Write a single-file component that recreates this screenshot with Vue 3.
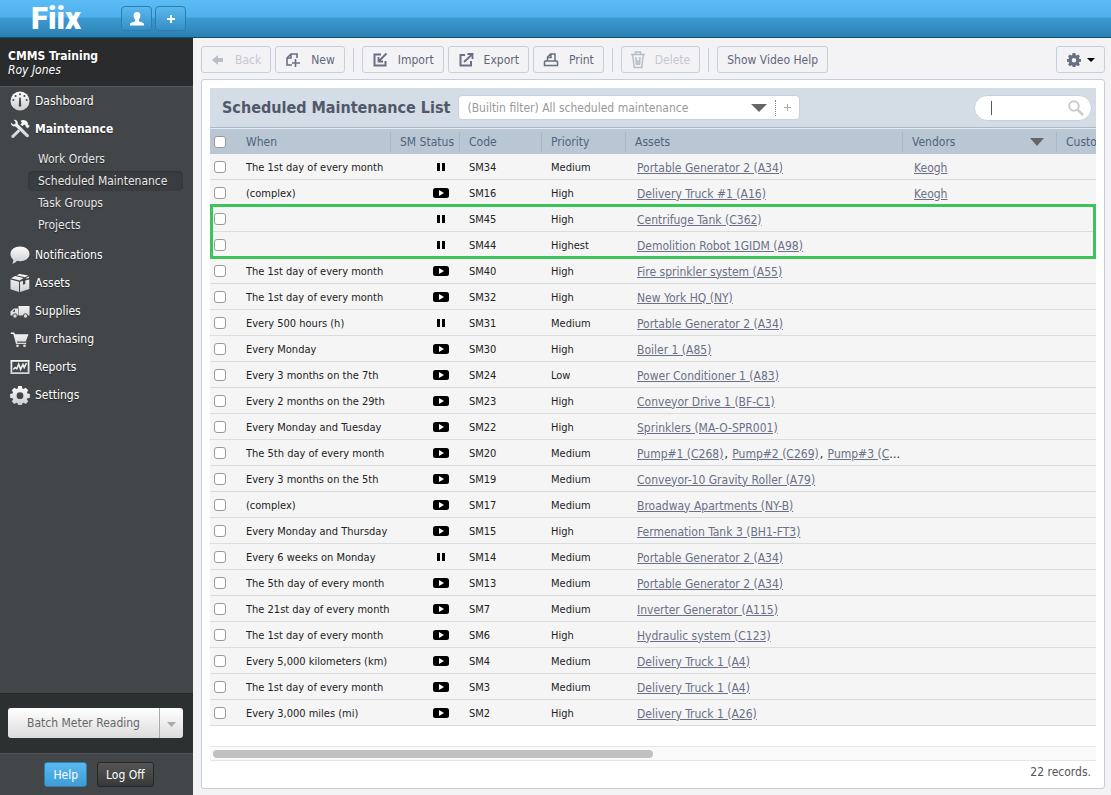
<template>
  <div class="page">
    <header class="topbar">
      <a class="logo" href="#">Fiix</a>
      <button class="top-btn" type="button" aria-label="Profile">
        <svg width="16" height="16" viewBox="0 0 16 16"><path fill="#fff" d="M8 1c2.300 0 3.500 1.600 3.400 3.800-.1 1.500-.7 2.900-1.500 3.700v1.500c.4 1 4.600 1.200 5.100 3v1.500H1V13c.5-1.800 4.700-2 5.100-3V8.500C5.300 7.700 4.700 6.300 4.600 4.800 4.500 2.600 5.700 1 8 1z" /></svg>
      </button>
      <button class="top-btn" type="button" aria-label="Add">
        <svg width="10" height="10" viewBox="0 0 10 10"><path d="M5 1v8M1 5h8" stroke="#fff" stroke-width="2" /></svg>
      </button>
    </header>

    <div class="body">
      <aside class="sidebar">
        <div class="account">
          <strong>CMMS Training</strong>
          <em>Roy Jones</em>
        </div>
        <nav class="nav">
          <template v-for="item in menu" :key="item.id">
            <a class="nav-item" :class="{ active: item.children }" href="#">
              <svg class="nav-icon" width="20" height="20" viewBox="0 0 20 20">
                <defs>
                  <linearGradient :id="'g-' + item.id" x1="0" y1="0" x2="0" y2="20" gradientUnits="userSpaceOnUse">
                    <stop offset="0" stop-color="#fff" />
                    <stop offset="1" stop-color="#ccc" />
                  </linearGradient>
                </defs>
                <g :fill="`url(#g-${item.id})`">
                  <template v-if="item.id === 'dashboard'">
                    <circle cx="10" cy="10" r="9.500" />
                    <path fill="#434648" d="M9.300 6.500h1.400l.5 7.500a1.300 1.300 0 1 1-2.400 0z" />
                    <g fill="#434648"><circle cx="10" cy="3.300" r="1" /><circle cx="5.600" cy="5" r="1" /><circle cx="14.400" cy="5" r="1" /><circle cx="3.300" cy="9" r="1" /><circle cx="16.700" cy="9" r="1" /></g>
                  </template>
                  <template v-else-if="item.id === 'maintenance'">
                    <path d="M3.800.8C6.300.4 8.200 2.300 7.800 5l10.800 10.700c1.200 1.400-.8 3.400-2.200 2.200L5.500 7.400C3 7.900.7 6.200.9 3.500l2.300 2 2-.5.400-1.900z" />
                    <path d="M10.500 1.800c3.200-1.600 6-.4 7.300 2l.2 2 1.800 1-2.100 2.600-2-1.600-.2-1.300-1.400-1-1.700 1.700-2-2 1.600-1.500z" />
                    <path d="M8.200 10.200l2 2-6.400 6.500c-1.500 1.100-3.300-.6-2.200-2.200z" />
                  </template>
                  <path v-else-if="item.id === 'notifications'" d="M10 1.500c5.400 0 9.500 3.200 9.500 7.400s-4.100 7.300-9.500 7.300c-1.100 0-2.100-.1-3-.4-1 1.500-2.800 2.700-4.800 3 .8-1.200 1.200-2.800 1-4.200C1.500 13.200.5 11.200.5 8.900.5 4.700 4.600 1.500 10 1.500z" />
                  <template v-else-if="item.id === 'assets'">
                    <path d="M.5 6.500l8.500 2.300V19L.5 16.200zM10 8.800l3-.8v3.700l2.300-.8V7.400l4-1v9.700L10 19zM1 5.300L5.200 3l8.300 2-3.800 2.600zM6.600 2.300L9.500 1l8.700 1.500-3.200 1.800zM19 3.400v1.500l-2.500.6-.7-.6z" />
                  </template>
                  <template v-else-if="item.id === 'supplies'">
                    <path d="M8.500 5h11v9.500h-11z" />
                    <path fill-rule="evenodd" d="M4 7.500h4v7H.5v-4zM4.300 8.500l-1.800 2.200H5V8.500z" />
                    <g stroke="#434648" stroke-width="1"><circle cx="5" cy="15" r="2.200" /><circle cx="15.500" cy="15" r="2.200" /></g>
                  </template>
                  <template v-else-if="item.id === 'purchasing'">
                    <path d="M.8 3.500h3.400l.8 1.700h13.500l-2.700 7.300H7l.3 1.300h8.900v1.200H6L3.300 4.900H.8z" />
                    <circle cx="7.500" cy="16.800" r="1.400" /><circle cx="14.500" cy="16.800" r="1.400" />
                  </template>
                  <template v-else-if="item.id === 'reports'">
                    <path fill-rule="evenodd" d="M.5 3h19v14H.5zM2.300 4.800v10.400h15.400V4.800z" />
                    <path fill="none" stroke="#eee" stroke-width="1.600" d="M3.300 12.500l1.900-2 1.600 1.200L8.700 7.200l1.900 5.200 2.300-5 1.300 3.200 2.200-4.500" />
                  </template>
                  <template v-else>
                    <path fill-rule="evenodd" d="M8.200 1h3.600l.5 2.400 1.300.6 2.100-1.300 2.500 2.500-1.300 2.100.6 1.300 2.400.5v3.600l-2.400.5-.6 1.300 1.300 2.100-2.500 2.500-2.100-1.300-1.300.6-.5 2.100H8.200l-.5-2.100-1.300-.6-2.100 1.300-2.500-2.500 1.300-2.100-.6-1.300-2.400-.5V9.100l2.400-.5.6-1.300-1.300-2.100 2.500-2.500L6.400 4l1.300-.6zM10 7.300a3.400 3.400 0 1 0 0 6.800 3.400 3.400 0 0 0 0-6.800z" />
                  </template>
                </g>
              </svg>
              {{ item.label }}
            </a>
            <ul v-if="item.children" class="subnav">
              <li v-for="child in item.children" :key="child">
                <a href="#" :class="{ current: child === 'Scheduled Maintenance' }">{{ child }}</a>
              </li>
            </ul>
          </template>
        </nav>
        <div class="batch">
          <div class="split">
            <button class="split-main" type="button">Batch Meter Reading</button>
            <button class="split-arrow" type="button" aria-label="More actions">
              <svg width="9" height="5" viewBox="0 0 9 5"><path fill="#aaa" d="M0 0h9L4.500 5z" /></svg>
            </button>
          </div>
        </div>
        <div class="session">
          <button class="help" type="button">Help</button>
          <button class="logoff" type="button">Log Off</button>
        </div>
      </aside>

      <main class="main">
        <div class="toolbar">
          <button class="tool" type="button" disabled>
            <svg width="14" height="14" viewBox="0 0 14 14"><path fill="#b9bdc6" d="M1 7l6-5v3h5v4H7v3z" /></svg>
            Back
          </button>
          <button class="tool" type="button">
            <svg width="16" height="16" viewBox="0 0 16 16"><path fill="none" stroke="#6a7083" stroke-width="1.600" d="M12 6V2H6L2 6v7h5M6 2v4H2M10.500 7v8M7 11h8" /></svg>
            New
          </button>
          <span class="sep"></span>
          <button class="tool" type="button">
            <svg width="16" height="16" viewBox="0 0 16 16"><path fill="none" stroke="#6a7083" stroke-width="2" d="M9 2.500H2.500v11h11V9" /><path fill="none" stroke="#6a7083" stroke-width="1.800" d="M14.500 1.500L7 9M6.500 5v4.500H11" /></svg>
            Import
          </button>
          <button class="tool" type="button">
            <svg width="16" height="16" viewBox="0 0 16 16"><path fill="none" stroke="#6a7083" stroke-width="2" d="M7 3H2.500v10.500H13V9" /><path fill="none" stroke="#6a7083" stroke-width="1.800" d="M6 10l8-7.500M9.500 2h5v5" /></svg>
            Export
          </button>
          <button class="tool" type="button">
            <svg width="16" height="16" viewBox="0 0 16 16"><path fill="none" stroke="#6a7083" stroke-width="1.500" d="M4.500 9V5l3-3H12v7M4.500 9H2l-.5 1v3.500h13V10l-.5-1H4.500M8 2v3.500H4.500" /></svg>
            Print
          </button>
          <span class="sep"></span>
          <button class="tool" type="button" disabled>
            <svg width="14" height="18" viewBox="0 0 14 18"><path fill="none" stroke="#b9bdc6" stroke-width="1.500" d="M0 3.500h14M4.500 3V1h5v2M1.800 4l1.400 12.500h7.600L12.200 4M5 6l.5 8M9 6l-.5 8M7 9v5" /></svg>
            Delete
          </button>
          <span class="sep"></span>
          <button class="tool" type="button">Show Video Help</button>
          <button class="tool gear" type="button" aria-label="Options">
            <svg width="14" height="14" viewBox="0 0 20 20"><path fill="#6a7083" fill-rule="evenodd" d="M8 0h4l.5 3 1.300.6L16 2l2.500 2.500-1.600 2.300.6 1.300 2.500.4v4l-2.500.4-.6 1.300 1.600 2.300L16 19l-2.300-1.600-1.200.6-.5 2H8l-.5-2-1.200-.6L4 19l-2.500-2.500 1.600-2.300-.6-1.300L0 12.500v-4l2.500-.4.6-1.300-1.600-2.300L4 2l2.200 1.600L7.500 3zM10 7a3 3 0 1 0 0 6.500A3 3 0 0 0 10 7z" /></svg>
            <svg width="8" height="4" viewBox="0 0 8 4"><path d="M0 0h8L4 4z" /></svg>
          </button>
        </div>

        <section class="panel">
          <div class="titlebar">
            <h1>Scheduled Maintenance List</h1>
            <div class="filter">
              <select aria-label="Filter">
                <option>(Builtin filter) All scheduled maintenance</option>
              </select>
              <svg class="down" width="16" height="8" viewBox="0 0 16 8"><path fill="#666" d="M0 0h16L8 8z" /></svg>
              <button type="button" aria-label="Add filter">
                <svg width="7" height="7" viewBox="0 0 7 7"><path stroke="#aaa" d="M3.500 0v7M0 3.500h7" /></svg>
              </button>
            </div>
            <div class="search">
              <input type="text" aria-label="Search">
              <span class="caret"></span>
              <svg width="16" height="16" viewBox="0 0 16 16"><g fill="none" stroke="#ccc" stroke-width="2"><circle cx="6" cy="6" r="4.800" /><path stroke-width="2.500" d="M9.500 9.500l5.500 5.500" /></g></svg>
            </div>
          </div>

          <div class="grid">
            <table>
              <colgroup>
                <col class="c-check"><col class="c-when"><col class="c-status"><col class="c-code">
                <col class="c-priority"><col class="c-assets"><col class="c-vendors"><col>
              </colgroup>
              <thead>
                <tr>
                  <th class="check"><input type="checkbox" aria-label="Select all"></th>
                  <th class="first">When</th>
                  <th>SM Status</th>
                  <th>Code</th>
                  <th>Priority</th>
                  <th>Assets</th>
                  <th>
                    <span class="sortable">Vendors
                      <svg width="14" height="8" viewBox="0 0 14 8"><path fill="#666" d="M0 0h14L7 8z" /></svg>
                    </span>
                  </th>
                  <th>Custo</th>
                </tr>
              </thead>
              <tbody>
                <tr v-for="row in rows" :key="row.code">
                  <td class="check"><input type="checkbox" :aria-label="'Select ' + row.code"></td>
                  <td>{{ row.when }}</td>
                  <td class="status">
                    <svg v-if="row.paused" width="16" height="10" viewBox="0 0 16 10"><path d="M4 1h3v8H4zM9 1h3v8H9z" /></svg>
                    <svg v-else width="16" height="10" viewBox="0 0 16 10"><rect width="16" height="10" rx="2.500" /><path fill="#fff" d="M6 2l5 3-5 3z" /></svg>
                  </td>
                  <td>{{ row.code }}</td>
                  <td>{{ row.priority }}</td>
                  <td class="links">
                    <template v-for="(asset, i) in row.assets" :key="asset"><span v-if="i" class="comma">, </span><a href="#">{{ asset }}</a></template>
                  </td>
                  <td class="links"><a v-if="row.vendor" href="#">{{ row.vendor }}</a></td>
                  <td></td>
                </tr>
              </tbody>
            </table>
            <div class="highlight"></div>
          </div>

          <div class="hscroll"><div class="thumb"></div></div>
          <footer class="count">{{ rows.length }} records.</footer>
        </section>
      </main>
    </div>
  </div>
</template>

<script setup>
const menu = [
  { id: 'dashboard', label: 'Dashboard' },
  {
    id: 'maintenance',
    label: 'Maintenance',
    children: ['Work Orders', 'Scheduled Maintenance', 'Task Groups', 'Projects']
  },
  { id: 'notifications', label: 'Notifications' },
  { id: 'assets', label: 'Assets' },
  { id: 'supplies', label: 'Supplies' },
  { id: 'purchasing', label: 'Purchasing' },
  { id: 'reports', label: 'Reports' },
  { id: 'settings', label: 'Settings' }
]

const item = (when, paused, code, priority, assets, vendor = '') => ({
  when, paused, code, priority, assets: [].concat(assets), vendor
})

const rows = [
  item('The 1st day of every month', true, 'SM34', 'Medium', 'Portable Generator 2 (A34)', 'Keogh'),
  item('(complex)', false, 'SM16', 'High', 'Delivery Truck #1 (A16)', 'Keogh'),
  item('', true, 'SM45', 'High', 'Centrifuge Tank (C362)'),
  item('', true, 'SM44', 'Highest', 'Demolition Robot 1GIDM (A98)'),
  item('The 1st day of every month', false, 'SM40', 'High', 'Fire sprinkler system (A55)'),
  item('The 1st day of every month', false, 'SM32', 'High', 'New York HQ (NY)'),
  item('Every 500 hours (h)', true, 'SM31', 'Medium', 'Portable Generator 2 (A34)'),
  item('Every Monday', false, 'SM30', 'High', 'Boiler 1 (A85)'),
  item('Every 3 months on the 7th', false, 'SM24', 'Low', 'Power Conditioner 1 (A83)'),
  item('Every 2 months on the 29th', false, 'SM23', 'High', 'Conveyor Drive 1 (BF-C1)'),
  item('Every Monday and Tuesday', false, 'SM22', 'High', 'Sprinklers (MA-O-SPR001)'),
  item('The 5th day of every month', false, 'SM20', 'Medium', ['Pump#1 (C268)', 'Pump#2 (C269)', 'Pump#3 (C270)']),
  item('Every 3 months on the 5th', false, 'SM19', 'Medium', 'Conveyor-10 Gravity Roller (A79)'),
  item('(complex)', false, 'SM17', 'Medium', 'Broadway Apartments (NY-B)'),
  item('Every Monday and Thursday', false, 'SM15', 'High', 'Fermenation Tank 3 (BH1-FT3)'),
  item('Every 6 weeks on Monday', true, 'SM14', 'Medium', 'Portable Generator 2 (A34)'),
  item('The 5th day of every month', false, 'SM13', 'Medium', 'Portable Generator 2 (A34)'),
  item('The 21st day of every month', false, 'SM7', 'Medium', 'Inverter Generator (A115)'),
  item('The 1st day of every month', false, 'SM6', 'High', 'Hydraulic system (C123)'),
  item('Every 5,000 kilometers (km)', false, 'SM4', 'Medium', 'Delivery Truck 1 (A4)'),
  item('The 1st day of every month', false, 'SM3', 'Medium', 'Delivery Truck 1 (A4)'),
  item('Every 3,000 miles (mi)', false, 'SM2', 'High', 'Delivery Truck 1 (A26)')
]
</script>

<style>
body {
  margin: 0;
  background: #f3f3f6;
}
</style>

<style scoped>
.page {
  display: flex;
  flex-direction: column;
  min-height: 100vh;
  font-family: Tahoma, "DejaVu Sans Condensed", "Noto Sans", sans-serif;
  font-size: 12px;
  color: #222;
}
.page * { box-sizing: border-box; }
button, input, select {
  font-family: inherit;
  font-size: 12px;
  margin: 0;
}
svg { flex: none; }

.topbar {
  display: flex;
  align-items: center;
  height: 38px;
  padding-left: 31px;
  background: linear-gradient(#5cbcf6 0, #4eb0ec 45%, #3c9ad2 50%, #2b7fb2 100%);
  border-bottom: 1px solid #0d4f78;
}
.logo {
  width: 90px;
  font-family: Roboto, "Open Sans", sans-serif;
  font-size: 31px;
  font-weight: 900;
  line-height: 38px;
  color: #fff;
  text-decoration: none;
}
.top-btn {
  display: flex;
  align-items: center;
  justify-content: center;
  width: 31px;
  height: 25px;
  margin-right: 3px;
  padding: 0;
  border: 1px solid #2b7db0;
  border-radius: 4px;
  background: linear-gradient(#5bb8ef, #348fc6);
}

.body {
  display: flex;
  flex: 1;
}
.sidebar {
  display: flex;
  flex-direction: column;
  flex: none;
  width: 193px;
  background: #434648;
  color: #fff;
  text-shadow: 0 1px 1px #222;
}
.account {
  display: flex;
  flex-direction: column;
  height: 49px;
  padding: 11px 8px 0;
  background: #2a2b2d;
  border-bottom: 1px solid #55585a;
  line-height: 14px;
}
.nav { flex: 1; }
.nav-item {
  display: flex;
  align-items: center;
  gap: 5px;
  height: 28px;
  padding-left: 10px;
  color: #fff;
  text-decoration: none;
}
.nav-item.active { font-weight: bold; }
.subnav {
  list-style: none;
  margin: 0;
  padding: 5px 10px 5px 28px;
}
.subnav li {
  height: 22px;
  padding-top: 1px;
}
.subnav a {
  display: block;
  height: 20px;
  padding-left: 10px;
  border-radius: 5px;
  line-height: 20px;
  color: #e8e8e8;
  text-decoration: none;
}
.subnav .current {
  background: #3a3d3f;
  box-shadow: inset 0 1px 2px #303234;
}
.batch {
  height: 60px;
  padding: 14px 10px 0 8px;
  background: #2d3031;
  border-top: 1px solid #252829;
}
.split {
  display: flex;
  height: 30px;
  border-radius: 3px;
  background: linear-gradient(#fff, #dcdcdc);
}
.split button {
  border: 0;
  padding: 0;
  background: none;
  color: #666;
}
.split .split-main { flex: 1; }
.split .split-arrow {
  width: 24px;
  border-left: 1px solid #aaa;
}
.session {
  display: flex;
  justify-content: center;
  gap: 10px;
  height: 42px;
  padding: 8px 0 0 5px;
  border-top: 1px solid #505355;
}
.session button {
  height: 25px;
  padding: 0 8px;
  border: 1px solid #2f7fb0;
  border-radius: 3px;
  color: #fff;
}
.help { background: linear-gradient(#5bb8f0, #3d9cd6); }
.session .logoff {
  border-color: #252728;
  background: linear-gradient(#555, #393939);
}

.main {
  display: flex;
  flex-direction: column;
  flex: 1;
  min-width: 0;
  padding: 8px 6px 6px 8px;
}
.toolbar {
  display: flex;
  align-items: center;
  gap: 4px;
  height: 27px;
  margin-bottom: 6px;
}
.tool {
  display: flex;
  align-items: center;
  justify-content: center;
  gap: 10px;
  height: 27px;
  padding: 0 9px;
  border: 1px solid #c9ced8;
  border-radius: 3px;
  background: #f3f3f6;
  color: #5f667a;
  white-space: nowrap;
}
.tool:disabled { color: #c6c9cf; }
.tool.gear {
  gap: 6px;
  width: 49px;
  margin-left: auto;
}
.sep {
  width: 1px;
  height: 24px;
  margin: 0 4px;
  background: #c9ced8;
}

.panel {
  display: flex;
  flex-direction: column;
  flex: 1;
  padding: 8px;
  border: 1px solid #c3cddb;
  border-radius: 3px;
  background: #fff;
}
.titlebar {
  display: flex;
  align-items: center;
  height: 40px;
  padding: 0 4px 0 12px;
  background: #d4dce6;
  border-bottom: 1px solid #a8b9cb;
}
h1 {
  margin: 0 8px 0 0;
  font-size: 16px;
  line-height: 24px;
  color: #50586a;
  white-space: nowrap;
}
.filter {
  display: flex;
  align-items: center;
  width: 342px;
  height: 25px;
  border: 1px solid #c9d1dc;
  border-radius: 4px;
  background: #fff;
}
.filter select {
  appearance: none;
  flex: 1;
  min-width: 0;
  height: 23px;
  padding: 0 8px;
  border: 0;
  background: none;
  color: #999;
}
.down { margin-right: 8px; }
.filter button {
  width: 24px;
  height: 16px;
  padding: 0;
  border: 0;
  border-left: 1px dotted #888;
  background: none;
  line-height: 0;
}
.search {
  display: flex;
  align-items: center;
  position: relative;
  width: 118px;
  height: 26px;
  margin-left: auto;
  padding: 0 7px 0 20px;
  border: 1px solid #c9d1dc;
  border-radius: 13px;
  background: #fff;
}
.search input {
  flex: 1;
  min-width: 0;
  border: 0;
  padding: 0;
  outline: 0;
  background: none;
}
.caret {
  position: absolute;
  left: 16px;
  width: 1px;
  height: 14px;
  background: #50586a;
}

.grid {
  position: relative;
  overflow: hidden;
}
table {
  width: 100%;
  border-collapse: separate;
  border-spacing: 0;
  table-layout: fixed;
}
.c-check { width: 26px; }
.c-when { width: 154px; }
.c-status { width: 69px; }
.c-code { width: 82px; }
.c-priority { width: 84px; }
.c-assets { width: 277px; }
.c-vendors { width: 154px; }
th {
  height: 26px;
  padding: 0 0 0 10px;
  border-top: 1px solid #e4eaf0;
  background: linear-gradient(90deg, #a5b7c8 1px, #b9c7d5 1px) 0 center / 100% 20px no-repeat #b9c7d5;
  color: #50647a;
  font-weight: normal;
  text-align: left;
  white-space: nowrap;
}
th.check, th.first { background: #b9c7d5; }
.sortable {
  display: flex;
  align-items: center;
  justify-content: space-between;
  padding-right: 12px;
}
td {
  height: 26px;
  padding: 2px 0 0 10px;
  border-bottom: 1px solid #dcdcdc;
  background: #f5f5f5;
  font-size: 11px;
  line-height: 16px;
  white-space: nowrap;
  overflow: hidden;
  text-overflow: ellipsis;
}
th.check, td.check { padding: 0 0 0 4px; }
.check input {
  appearance: none;
  display: block;
  width: 12px;
  height: 12px;
  border: 1px solid #999;
  border-radius: 3px;
  background: #fff;
}
.status svg { display: block; }
td.status { padding: 0 0 0 43px; }
td.links {
  padding-left: 12px;
  font-size: 12px;
}
.links a {
  color: #6a7086;
  text-decoration: underline;
}
.comma { margin: 0 1px; }
.highlight {
  position: absolute;
  top: 76px;
  left: 0;
  right: 0;
  height: 55px;
  border: 3px solid #3cc35a;
}

.hscroll {
  height: 15px;
  margin-top: 20px;
  padding: 3px;
  border: 1px solid #e6e6e6;
  border-width: 1px 0;
  background: #fafafa;
}
.thumb {
  width: 50%;
  height: 8px;
  border-radius: 4px;
  background: #c1c1c1;
}
.count {
  padding: 3px 5px 0;
  line-height: 16px;
  text-align: right;
  color: #555;
}
</style>
